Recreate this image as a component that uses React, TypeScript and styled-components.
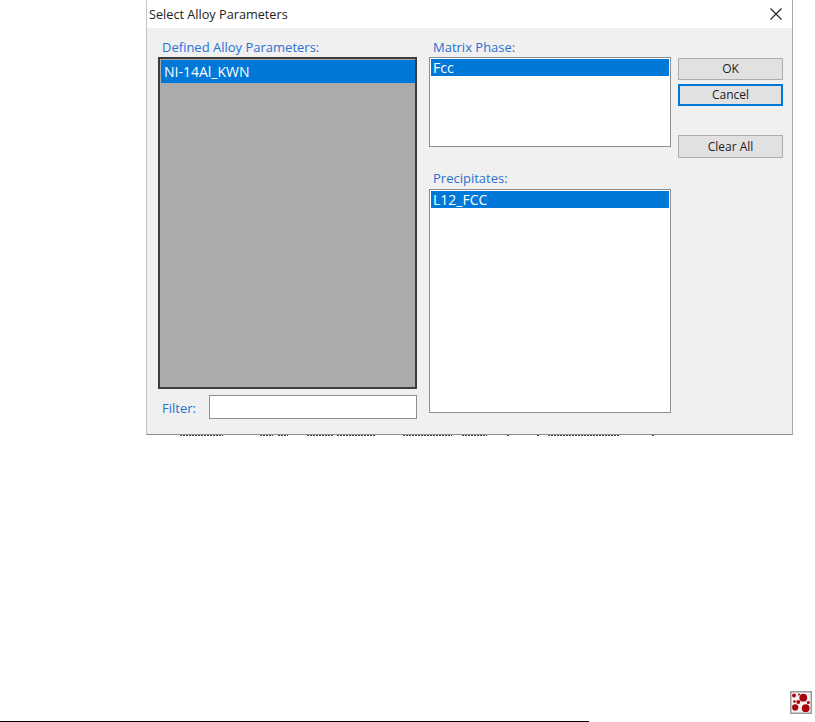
import React from 'react';
import styled, { createGlobalStyle } from 'styled-components';

const GlobalStyle = createGlobalStyle`
  html, body {
    margin: 0;
    padding: 0;
    background: #fff;
    overflow: hidden;
  }
  body {
    font-family: 'Open Sans', 'Liberation Sans', sans-serif;
  }
`;

const Page = styled.div`
  width: 815px;
  height: 722px;
  display: flex;
  flex-direction: column;
`;

const Dialog = styled.div`
  width: 647px;
  height: 435px;
  margin-left: 146px;
  box-sizing: border-box;
  display: flex;
  flex-direction: column;
  background: #f0f0f0;
  border-left: 1px solid #c4c4c4;
  border-right: 1px solid #a8a8a8;
  border-bottom: 1px solid #8e8e8e;
  flex: none;
`;

const TitleBar = styled.div`
  height: 28px;
  flex: none;
  box-sizing: border-box;
  background: #fff;
  display: flex;
  align-items: center;
  justify-content: space-between;
  padding: 0 10px 1px 2px;
`;

const Title = styled.span`
  font-size: 12.7px;
  color: #222;
`;

const CloseIcon = () => (
  <svg width="12" height="12" viewBox="0 0 12 12" fill="none" stroke="#222" strokeWidth="1.1">
    <path d="M0.5 0.5 L11.5 11.5 M11.5 0.5 L0.5 11.5" />
  </svg>
);

const Body = styled.div`
  flex: 1;
  display: grid;
  grid-template-columns: 259px 242px 105px;
  column-gap: 12px;
  padding: 0 0 0 11px;
`;

const Column = styled.div`
  display: flex;
  flex-direction: column;
`;

const Label = styled.label`
  display: block;
  font-size: 13px;
  line-height: 16px;
  color: #2a72cf;
  padding-left: 4px;
  height: 16px;
`;

const ColumnLabel = styled(Label)`
  margin-top: 11px;
  height: 18px;
`;

const SecondLabel = styled(Label)`
  margin-top: 23px;
  height: 19px;
`;

const ListBox = styled.div<{ $dark?: boolean; $height: number }>`
  box-sizing: border-box;
  height: ${({ $height }) => $height}px;
  background: ${({ $dark }) => ($dark ? '#ababab' : '#fff')};
  border: ${({ $dark }) => ($dark ? '2px solid #3c3c3c' : '1px solid #8a8f96')};
  padding: ${({ $dark }) => ($dark ? '1px 0 1px 1px' : '1px')};
`;

const ListRow = styled.div<{ $tall?: boolean }>`
  height: ${({ $tall }) => ($tall ? 23 : 17)}px;
  line-height: ${({ $tall }) => ($tall ? 23 : 17)}px;
  background: #0078d7;
  color: #fff;
  font-size: 14px;
  padding-left: ${({ $tall }) => ($tall ? 3 : 2)}px;
`;

const FilterRow = styled.div`
  display: flex;
  align-items: center;
  margin-top: 6px;
`;

const FilterLabel = styled(Label)`
  width: 51px;
  margin-top: 2px;
  box-sizing: border-box;
`;

const FilterInput = styled.input`
  box-sizing: border-box;
  width: 208px;
  height: 24px;
  border: 1px solid #8f8f8f;
  background: #fff;
  outline: none;
`;

const ButtonColumn = styled.div`
  display: flex;
  flex-direction: column;
  padding-top: 30px;
  margin-left: -5px;
  width: 105px;
`;

const Button = styled.button<{ $focused?: boolean; $gap?: number; $height?: number }>`
  box-sizing: border-box;
  width: 105px;
  height: ${({ $height }) => $height ?? 22}px;
  margin-top: ${({ $gap }) => $gap ?? 0}px;
  background: #e1e1e1;
  border: ${({ $focused }) => ($focused ? '2px solid #0078d7' : '1px solid #adadad')};
  color: #1c1c1c;
  font-family: inherit;
  font-size: 12px;
  padding: 0 0 1px;
`;

// tops of the page text that sticks out under the dialog
const Underlap = styled.svg`
  display: block;
  flex: none;
  margin-left: 146px;
`;

const underlapSegments = [
  [34, 77], [114, 127], [132, 142], [161, 187], [191, 229], [257, 306],
  [316, 341], [361, 363], [391, 393], [402, 474], [506, 508],
];

const Spacer = styled.div`
  flex: 1;
`;

const Footer = styled.div`
  display: flex;
  flex-direction: column;
  align-items: stretch;
`;

const MarkRow = styled.div`
  display: flex;
  justify-content: flex-end;
  padding-right: 3px;
  margin-bottom: 7px;
`;

const Rule = styled.div`
  width: 589px;
  height: 1px;
  background: #000;
`;

const PrecipitateMark = () => (
  <svg width="22" height="23" viewBox="0 0 22 23">
    <rect x="0.75" y="0.75" width="20.5" height="21.5" fill="#f6f2f2" stroke="#9a9a9a" strokeWidth="1.5" />
    <g fill="#a8060f">
      <circle cx="13.3" cy="6.7" r="3.9" />
      <circle cx="15.7" cy="17.2" r="3.9" />
      <circle cx="5.2" cy="16.4" r="3.1" />
      <circle cx="4" cy="4.5" r="1.9" />
      <circle cx="8.3" cy="11" r="2" />
      <circle cx="4.5" cy="10.5" r="1.3" />
      <circle cx="18.3" cy="11.5" r="1.6" />
      <circle cx="9" cy="3.5" r="1" />
    </g>
  </svg>
);

export default function App() {
  return (
    <Page>
      <GlobalStyle />
      <Dialog>
        <TitleBar>
          <Title>Select Alloy Parameters</Title>
          <CloseIcon />
        </TitleBar>
        <Body>
          <Column>
            <ColumnLabel>Defined Alloy Parameters:</ColumnLabel>
            <ListBox $dark $height={332}>
              <ListRow $tall>NI-14Al_KWN</ListRow>
            </ListBox>
            <FilterRow>
              <FilterLabel>Filter:</FilterLabel>
              <FilterInput />
            </FilterRow>
          </Column>
          <Column>
            <ColumnLabel>Matrix Phase:</ColumnLabel>
            <ListBox $height={90}>
              <ListRow>Fcc</ListRow>
            </ListBox>
            <SecondLabel>Precipitates:</SecondLabel>
            <ListBox $height={224}>
              <ListRow>L12_FCC</ListRow>
            </ListBox>
          </Column>
          <ButtonColumn>
            <Button>OK</Button>
            <Button $focused $gap={4}>Cancel</Button>
            <Button $gap={29} $height={23}>Clear All</Button>
          </ButtonColumn>
        </Body>
      </Dialog>
      <Underlap width="520" height="2" viewBox="0 0 520 2">
        {underlapSegments.map(([from, to]) => (
          <line key={from} x1={from} x2={to} y1="0.5" y2="0.5" stroke="#444" strokeDasharray="2 1" />
        ))}
      </Underlap>
      <Spacer />
      <Footer>
        <MarkRow>
          <PrecipitateMark />
        </MarkRow>
        <Rule />
      </Footer>
    </Page>
  );
}
